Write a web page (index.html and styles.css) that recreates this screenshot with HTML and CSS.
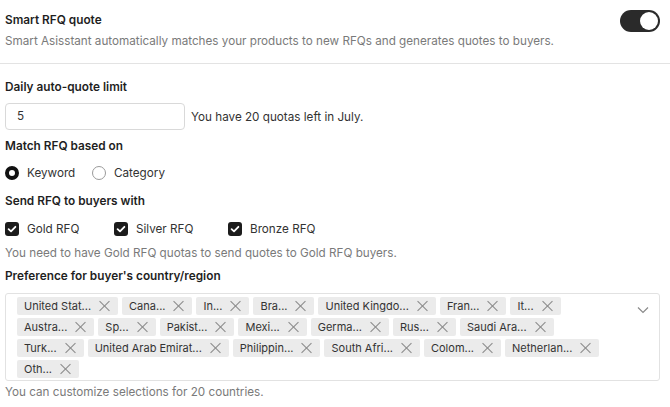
FILE: index.html
```html
<!DOCTYPE html>
<html>
<head>
<meta charset="utf-8">
<link rel="stylesheet" href="styles.css">
</head>
<body>
<div class="header">
  <div class="header-text">
    <div class="title">Smart RFQ quote</div>
    <div class="desc">Smart Asisstant automatically matches your products to new RFQs and generates quotes to buyers.</div>
  </div>
  <div class="toggle"><span class="knob"></span></div>
</div>
<div class="content">
  <div class="label l-daily">Daily auto-quote limit</div>
  <div class="input-row">
    <div class="input">5</div>
    <span class="text">You have 20 quotas left in July.</span>
  </div>
  <div class="label l-match">Match RFQ based on</div>
  <div class="radios">
    <label class="opt r1"><span class="radio checked"></span>Keyword</label>
    <label class="opt"><span class="radio"></span>Category</label>
  </div>
  <div class="label l-send">Send RFQ to buyers with</div>
  <div class="checks">
    <label class="opt c1"><span class="check"><svg viewBox="0 0 14 14" width="14" height="14"><path d="M3.6 7.2 L6 9.4 L10.4 4.8" fill="none" stroke="#fff" stroke-width="1.8" stroke-linecap="round" stroke-linejoin="round"/></svg></span>Gold RFQ</label>
    <label class="opt c2"><span class="check"><svg viewBox="0 0 14 14" width="14" height="14"><path d="M3.6 7.2 L6 9.4 L10.4 4.8" fill="none" stroke="#fff" stroke-width="1.8" stroke-linecap="round" stroke-linejoin="round"/></svg></span>Silver RFQ</label>
    <label class="opt"><span class="check"><svg viewBox="0 0 14 14" width="14" height="14"><path d="M3.6 7.2 L6 9.4 L10.4 4.8" fill="none" stroke="#fff" stroke-width="1.8" stroke-linecap="round" stroke-linejoin="round"/></svg></span>Bronze RFQ</label>
  </div>
  <div class="note">You need to have Gold RFQ quotas to send quotes to Gold RFQ buyers.</div>
  <div class="label l-pref">Preference for buyer's country/region</div>
  <div class="select">
    <div class="tags">
      <span class="tag">United Stat...<i class="x"></i></span>
      <span class="tag">Cana...<i class="x"></i></span>
      <span class="tag">In...<i class="x"></i></span>
      <span class="tag">Bra...<i class="x"></i></span>
      <span class="tag">United Kingdo...<i class="x"></i></span>
      <span class="tag">Fran...<i class="x"></i></span>
      <span class="tag">It...<i class="x"></i></span>
      <span class="tag">Austra...<i class="x"></i></span>
      <span class="tag">Sp...<i class="x"></i></span>
      <span class="tag">Pakist...<i class="x"></i></span>
      <span class="tag">Mexi...<i class="x"></i></span>
      <span class="tag">Germa...<i class="x"></i></span>
      <span class="tag">Rus...<i class="x"></i></span>
      <span class="tag">Saudi Ara...<i class="x"></i></span>
      <span class="tag">Turk...<i class="x"></i></span>
      <span class="tag">United Arab Emirat...<i class="x"></i></span>
      <span class="tag">Philippin...<i class="x"></i></span>
      <span class="tag">South Afri...<i class="x"></i></span>
      <span class="tag">Colom...<i class="x"></i></span>
      <span class="tag">Netherlan...<i class="x"></i></span>
      <span class="tag">Oth...<i class="x"></i></span>
    </div>
    <svg class="chev" viewBox="0 0 12 8" width="12" height="8"><path d="M1 1.5 L6 6.5 L11 1.5" fill="none" stroke="#8a8a8a" stroke-width="1.2"/></svg>
  </div>
  <div class="footer">You can customize selections for 20 countries.</div>
</div>
</body>
</html>
```
FILE: styles.css
```css
* { box-sizing: border-box; }
body {
  margin: 0;
  width: 670px;
  font-family: Inter, "Noto Sans", sans-serif;
  font-size: 11.7px;
  line-height: 20px;
  color: #222;
  background: #fff;
}
.header {
  display: flex;
  justify-content: space-between;
  align-items: flex-start;
  padding: 10px 10px 12px 5px;
  border-bottom: 1px solid #e3e3e3;
}
.title { font-weight: 600; font-size: 11.8px; color: #1f1f1f; }
.desc { margin-top: 1px; color: #7a7a7a; }
.toggle {
  width: 40px;
  height: 22px;
  border-radius: 11px;
  background: #2a2a2a;
  display: flex;
  align-items: center;
  justify-content: flex-end;
  padding-right: 2px;
}
.knob {
  width: 18px;
  height: 18px;
  border-radius: 50%;
  background: #fff;
}
.content { padding: 0 10px 0 5px; }
.label { font-weight: 600; font-size: 11.8px; color: #1f1f1f; }
.l-daily { margin-top: 13px; }
.input-row { display: flex; align-items: center; margin-top: 6px; }
.input {
  width: 180px;
  height: 27px;
  border: 1px solid #d9d9d9;
  border-radius: 4px;
  padding-left: 11px;
  line-height: 25px;
  color: #333;
}
.input-row .text { margin-left: 6px; color: #333; }
.l-match { margin-top: 6px; }
.radios { display: flex; margin-top: 7px; }
.opt { display: flex; align-items: center; color: #333; height: 20px; }
.radio {
  width: 14px;
  height: 14px;
  border-radius: 50%;
  border: 1px solid #9a9a9a;
  margin-right: 8px;
}
.radio.checked { border: 4px solid #111; }
.r1 { width: 87px; }
.l-send { margin-top: 8px; }
.checks { display: flex; margin-top: 8px; }
.check {
  width: 14px;
  height: 14px;
  border-radius: 3px;
  background: #1c1c1c;
  margin-right: 8px;
  display: flex;
}
.c1 { width: 109px; }
.c2 { width: 114px; }
.note { margin-top: 4px; color: #7a7a7a; }
.l-pref { margin-top: 3px; }
.select {
  margin-top: 7px;
  height: 88px;
  border: 1px solid #e2e2e2;
  border-radius: 3px;
  display: flex;
  justify-content: space-between;
  padding: 3px 10px 3px 11px;
}
.tags {
  display: flex;
  flex-wrap: wrap;
  gap: 3px 4px;
  align-content: flex-start;
  width: 600px;
}
.tag {
  display: flex;
  align-items: center;
  height: 18px;
  background: #ebebeb;
  border-radius: 2px;
  padding: 0 8px 0 7px;
  font-size: 11px;
  color: #333;
}
.x {
  position: relative;
  width: 11px;
  height: 11px;
  margin-left: 8px;
}
.x::before, .x::after {
  content: "";
  position: absolute;
  left: 5px;
  top: -1.5px;
  width: 1px;
  height: 14px;
  background: #8a8a8a;
}
.x::before { transform: rotate(45deg); }
.x::after { transform: rotate(-45deg); }
.chev { margin-top: 9px; }
.footer { margin-top: 1px; color: #7a7a7a; }
```
